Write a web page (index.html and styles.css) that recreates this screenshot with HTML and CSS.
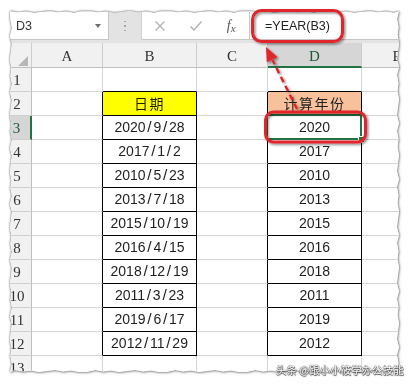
FILE: index.html
```html
<!DOCTYPE html>
<html lang="zh">
<head>
<meta charset="utf-8">
<title>YEAR</title>
<link rel="stylesheet" href="styles.css">
</head>
<body>
<div class="paper">
  <div class="shot">
    <div class="fbar">
      <div class="namebox"><span>D3</span><i class="nb-arrow"></i></div>
      <div class="sep"><i></i><i></i><i></i></div>
      <div class="btns">
        <span class="btn"><svg width="12" height="12" viewBox="0 0 12 12"><path d="M1.5 1.5L10.5 10.5M10.5 1.5L1.5 10.5" stroke="#b4b4b4" stroke-width="1.4" fill="none"/></svg></span>
        <span class="btn"><svg width="14" height="12" viewBox="0 0 14 12"><path d="M1.5 6.5L5 10L12.5 1.5" stroke="#b4b4b4" stroke-width="1.5" fill="none"/></svg></span>
        <span class="btn fx"><i>f</i><i class="fxx">x</i></span>
      </div>
      <div class="fbox">=YEAR(B3)</div>
    </div>
    <div class="grid">
      <div class="c h corner"><svg width="32" height="25" viewBox="0 0 32 25"><polygon points="28,13 28,23 18,23" fill="#b7b7b7"/></svg></div>
      <div class="c h">A</div>
      <div class="c h">B</div>
      <div class="c h">C</div>
      <div class="c h hs">D</div>
      <div class="c h">E</div>

      <div class="c r">1</div><div class="c"></div><div class="c tt"></div><div class="c"></div><div class="c tt"></div><div class="c"></div>

      <div class="c r">2</div><div class="c tl"></div><div class="c tb yel ttl">日期</div><div class="c tl"></div><div class="c tb org ttl">计算年份</div><div class="c"></div>

      <div class="c r rs">3</div><div class="c tl"></div><div class="c tb">2020<span class="sl">/</span>9<span class="sl">/</span>28</div><div class="c tl"></div><div class="c tb sel">2020</div><div class="c"></div>

      <div class="c r">4</div><div class="c tl"></div><div class="c tb">2017<span class="sl">/</span>1<span class="sl">/</span>2</div><div class="c tl"></div><div class="c tb">2017</div><div class="c"></div>

      <div class="c r">5</div><div class="c tl"></div><div class="c tb">2010<span class="sl">/</span>5<span class="sl">/</span>23</div><div class="c tl"></div><div class="c tb">2010</div><div class="c"></div>

      <div class="c r">6</div><div class="c tl"></div><div class="c tb">2013<span class="sl">/</span>7<span class="sl">/</span>18</div><div class="c tl"></div><div class="c tb">2013</div><div class="c"></div>

      <div class="c r">7</div><div class="c tl"></div><div class="c tb">2015<span class="sl">/</span>10<span class="sl">/</span>19</div><div class="c tl"></div><div class="c tb">2015</div><div class="c"></div>

      <div class="c r">8</div><div class="c tl"></div><div class="c tb">2016<span class="sl">/</span>4<span class="sl">/</span>15</div><div class="c tl"></div><div class="c tb">2016</div><div class="c"></div>

      <div class="c r">9</div><div class="c tl"></div><div class="c tb">2018<span class="sl">/</span>12<span class="sl">/</span>19</div><div class="c tl"></div><div class="c tb">2018</div><div class="c"></div>

      <div class="c r">10</div><div class="c tl"></div><div class="c tb">2011<span class="sl">/</span>3<span class="sl">/</span>23</div><div class="c tl"></div><div class="c tb">2011</div><div class="c"></div>

      <div class="c r">11</div><div class="c tl"></div><div class="c tb">2019<span class="sl">/</span>6<span class="sl">/</span>17</div><div class="c tl"></div><div class="c tb">2019</div><div class="c"></div>

      <div class="c r">12</div><div class="c tl"></div><div class="c tb">2012<span class="sl">/</span>11<span class="sl">/</span>29</div><div class="c tl"></div><div class="c tb">2012</div><div class="c"></div>

      <div class="c r">13</div><div class="c"></div><div class="c"></div><div class="c"></div><div class="c"></div><div class="c"></div>
    </div>
  </div>
</div>
<svg class="marks" width="412" height="384" viewBox="0 0 412 384">
  <defs>
    <filter id="sh" x="-20%" y="-20%" width="140%" height="140%">
      <feDropShadow dx="1.5" dy="1.5" stdDeviation="1.2" flood-color="#000" flood-opacity="0.45"/>
    </filter>
  </defs>
  <g filter="url(#sh)" stroke="#e0262a" fill="none">
    <rect x="252.5" y="10.5" width="90" height="31" rx="9" stroke-width="3"/>
    <rect x="265.5" y="112" width="100" height="30" rx="8" stroke-width="3"/>
    <path d="M297 109L272.5 60" stroke-width="2.5" stroke-dasharray="6 4"/>
    <polygon points="266,47 277.6,56.9 266.8,62.3" fill="#e0262a" stroke="none"/>
  </g>
</svg>
<div class="wm">头条 @跟小小筱学办公技能</div>
</body>
</html>
```

FILE: styles.css
```css
html, body {
  margin: 0;
  padding: 0;
}
body {
  width: 412px;
  height: 384px;
  overflow: hidden;
  position: relative;
  background: #fff;
  font-family: "Liberation Sans", Arial, sans-serif;
}
.paper {
  width: 412px;
  height: 384px;
  filter: drop-shadow(0 0 1px rgba(0,0,0,0.6)) drop-shadow(1px 1px 1px rgba(0,0,0,0.2));
}
.shot {
  width: 412px;
  height: 384px;
  overflow: hidden;
  background: #e3e3e3;
  clip-path: polygon(10px 11px, 18px 12.5px, 26px 11.5px, 34px 13px, 42px 12px, 50px 11px, 58px 12.5px, 66px 11.5px, 74px 13px, 82px 11px, 90px 11px, 98px 12.5px, 106px 11.5px, 114px 13px, 122px 12px, 130px 11px, 138px 12.5px, 146px 11.5px, 154px 13px, 162px 11px, 170px 11px, 178px 12.5px, 186px 11.5px, 194px 13px, 202px 12px, 210px 11px, 218px 12.5px, 226px 11.5px, 234px 13px, 242px 11px, 250px 11px, 258px 12.5px, 266px 11.5px, 274px 13px, 282px 12px, 290px 11px, 298px 12.5px, 306px 11.5px, 314px 13px, 322px 11px, 330px 11px, 338px 12.5px, 346px 11.5px, 354px 13px, 362px 12px, 370px 11px, 378px 12.5px, 386px 11.5px, 394px 13px, 399px 11px,
    397px 19px, 398.5px 27px, 397.5px 35px, 399px 43px, 398px 51px, 397px 59px, 399px 67px, 397px 75px, 398.5px 83px, 397.5px 91px, 399px 99px, 398px 107px, 397px 115px, 399px 123px, 397px 131px, 398.5px 139px, 397.5px 147px, 399px 155px, 398px 163px, 397px 171px, 399px 179px, 397px 187px, 398.5px 195px, 397.5px 203px, 399px 211px, 398px 219px, 397px 227px, 399px 235px, 397px 243px, 398.5px 251px, 397.5px 259px, 399px 267px, 398px 275px, 397px 283px, 399px 291px, 397px 299px, 398.5px 307px, 397.5px 315px, 399px 323px, 398px 331px, 397px 339px, 399px 347px, 397px 355px, 398.5px 363px, 397.5px 371px,
    399px 372px, 391px 370.5px, 383px 371.5px, 375px 370px, 367px 371px, 359px 372px, 351px 370.5px, 343px 371.5px, 335px 370px, 327px 372px, 319px 372px, 311px 370.5px, 303px 371.5px, 295px 370px, 287px 371px, 279px 372px, 271px 370.5px, 263px 371.5px, 255px 370px, 247px 372px, 239px 372px, 231px 370.5px, 223px 371.5px, 215px 370px, 207px 371px, 199px 372px, 191px 370.5px, 183px 371.5px, 175px 370px, 167px 372px, 159px 372px, 151px 370.5px, 143px 371.5px, 135px 370px, 127px 371px, 119px 372px, 111px 370.5px, 103px 371.5px, 95px 370px, 87px 372px, 79px 372px, 71px 370.5px, 63px 371.5px, 55px 370px, 47px 371px, 39px 372px, 31px 370.5px, 23px 371.5px, 15px 370px, 10px 372px,
    12px 364px, 10.5px 356px, 11.5px 348px, 10px 340px, 11px 332px, 12px 324px, 10px 316px, 12px 308px, 10.5px 300px, 11.5px 292px, 10px 284px, 11px 276px, 12px 268px, 10px 260px, 12px 252px, 10.5px 244px, 11.5px 236px, 10px 228px, 11px 220px, 12px 212px, 10px 204px, 12px 196px, 10.5px 188px, 11.5px 180px, 10px 172px, 11px 164px, 12px 156px, 10px 148px, 12px 140px, 10.5px 132px, 11.5px 124px, 10px 116px, 11px 108px, 12px 100px, 10px 92px, 12px 84px, 10.5px 76px, 11.5px 68px, 10px 60px, 11px 52px, 12px 44px, 10px 36px, 12px 28px, 10.5px 20px);
}

/* formula bar */
.fbar {
  display: flex;
  height: 43px;
  padding-top: 12px;
  box-sizing: border-box;
  background: #e3e3e3;
}
.namebox {
  width: 109px;
  height: 28px;
  box-sizing: border-box;
  background: #fff;
  border-right: 1px solid #c6c6c6;
  border-bottom: 1px solid #c6c6c6;
  display: flex;
  align-items: center;
  padding-left: 16px;
  font-size: 12.5px;
  color: #333;
}
.nb-arrow {
  margin-left: auto;
  margin-right: 7px;
  width: 0;
  height: 0;
  border-left: 3.5px solid transparent;
  border-right: 3.5px solid transparent;
  border-top: 4px solid #6e6e6e;
}
.sep {
  width: 32px;
  display: flex;
  flex-direction: column;
  align-items: center;
  justify-content: center;
  gap: 3px;
  padding-bottom: 3px;
}
.sep i {
  display: block;
  width: 1.5px;
  height: 1.5px;
  background: #a8a8a8;
}
.btns {
  width: 108px;
  height: 28px;
  box-sizing: border-box;
  background: #fff;
  border-left: 1px solid #d0d0d0;
  border-bottom: 1px solid #c6c6c6;
  display: flex;
  align-items: center;
}
.btn {
  width: 36px;
  display: flex;
  justify-content: center;
  align-items: center;
}
.fx {
  font-family: "Liberation Serif", serif;
  font-style: italic;
  font-size: 14px;
  color: #555;
  padding-top: 1px;
}
.fx i { font-style: italic; }
.fxx { font-size: 11px; margin-top: 3px; }
.fbox {
  flex: 1;
  height: 28px;
  box-sizing: border-box;
  background: #fff;
  border-left: 1px solid #c6c6c6;
  border-bottom: 1px solid #c6c6c6;
  padding-left: 15px;
  display: flex;
  align-items: center;
  font-size: 12.5px;
  color: #222;
}

/* grid */
.grid {
  display: grid;
  grid-template-columns: 32px 71px 94px 71px 94px 71px;
  grid-template-rows: 25px;
  grid-auto-rows: 24px;
  background: #fff;
}
.c {
  box-sizing: border-box;
  border-right: 1px solid #d6d6d6;
  border-bottom: 1px solid #d6d6d6;
  text-align: center;
  line-height: 23px;
  font-size: 14px;
  color: #1e1e1e;
  white-space: nowrap;
  position: relative;
}
.h {
  background: #f1f1f1;
  border-right-color: #cccccc;
  border-bottom-color: #bfbfbf;
  font-family: "Liberation Serif", serif;
  font-size: 15px;
  line-height: 26px;
  color: #333;
}
.corner svg { display: block; }
.r {
  background: #f1f1f1;
  border-right-color: #bfbfbf;
  border-bottom-color: #cfcfcf;
  font-family: "Liberation Serif", serif;
  font-size: 15px;
  line-height: 25px;
  color: #333;
  padding-left: 3px;
}
.hs {
  background: #d6d6d6;
  border-bottom: 2px solid #217346;
  color: #1d5a36;
}
.rs {
  background: #d6d6d6;
  border-right: 2px solid #217346;
  color: #1d5a36;
}
.tl { border-right-color: #000; }
.tt { border-bottom-color: #000; }
.tb { border-right-color: #000; border-bottom-color: #000; }
.yel { background: #ffff00; }
.org { background: #f7c19c; }
.ttl {
  font-family: "Noto Sans CJK SC", sans-serif;
  font-size: 14px;
  letter-spacing: 1.5px;
  line-height: 22px;
}
.sl {
  display: inline-block;
  width: 7.8px;
  text-align: center;
  font-size: 15.5px;
  line-height: 1;
}
.sel::after {
  content: "";
  position: absolute;
  left: -2px;
  top: -2px;
  right: -1px;
  bottom: -1px;
  border: 2px solid #217346;
}
.sel::before {
  content: "";
  position: absolute;
  right: -4px;
  bottom: -4px;
  width: 5px;
  height: 5px;
  background: #217346;
  border: 1px solid #fff;
  z-index: 1;
}

/* annotations */
.marks {
  position: absolute;
  left: 0;
  top: 0;
  pointer-events: none;
}
.wm {
  position: absolute;
  left: 276px;
  top: 362px;
  font-family: "Noto Sans CJK SC", sans-serif;
  font-size: 10.5px;
  line-height: 15px;
  color: #fff;
  white-space: nowrap;
  text-shadow: 0 0 1px #333, 0.5px 0.5px 1px #444, -0.5px -0.5px 1px #666;
}
```
